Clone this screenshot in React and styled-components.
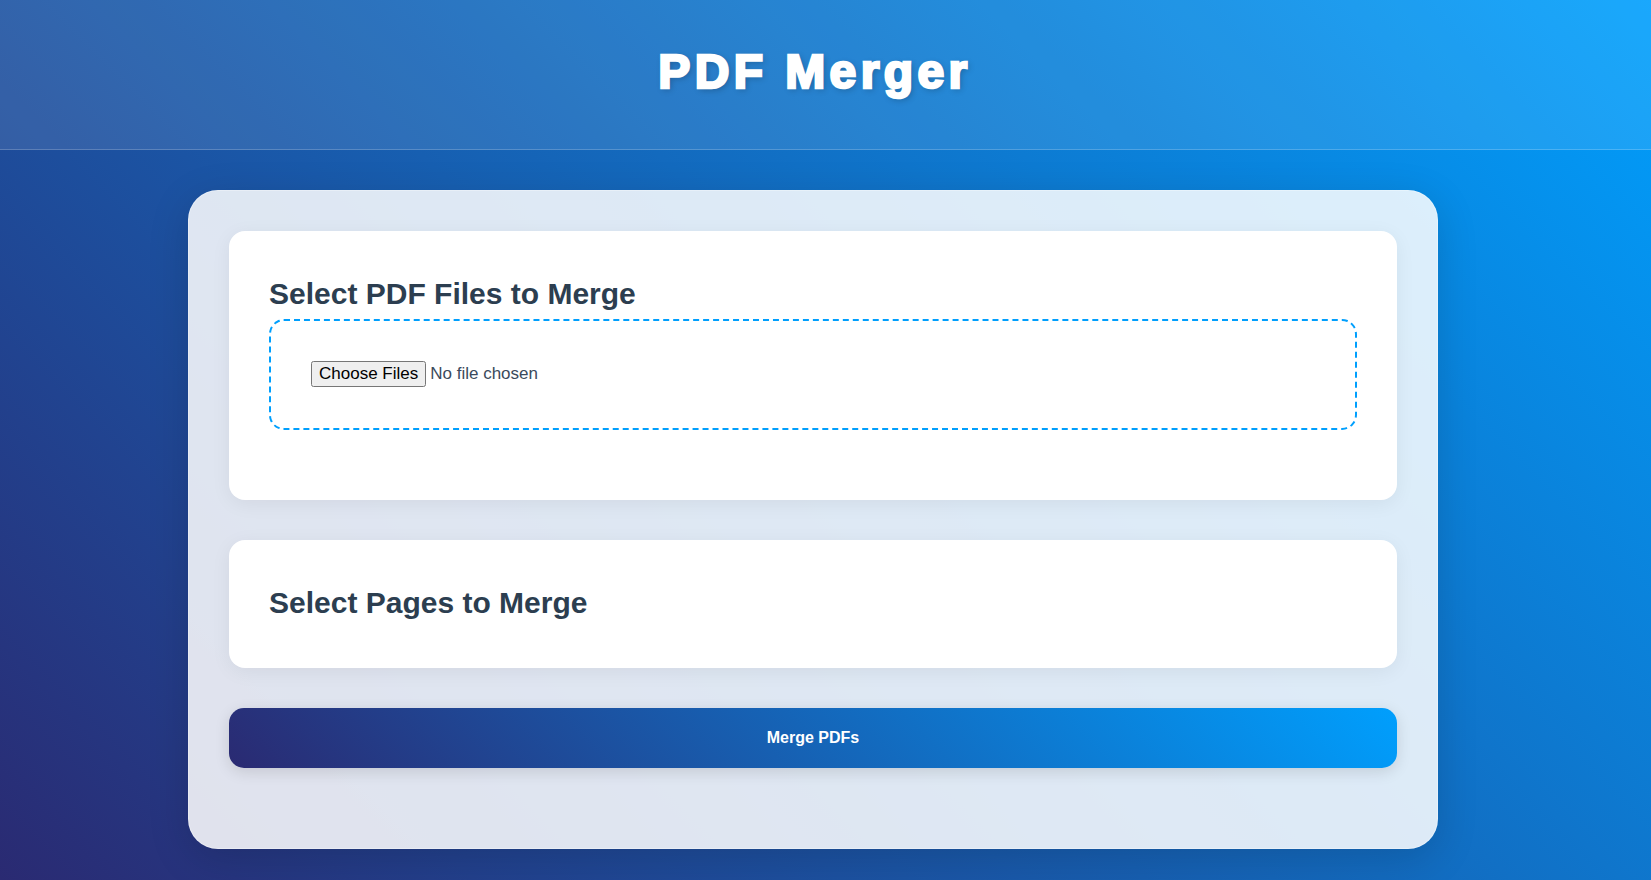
import React from 'react';
import styled, { createGlobalStyle } from 'styled-components';

const GlobalStyle = createGlobalStyle`
  * {
    box-sizing: border-box;
  }

  body {
    margin: 0;
    min-height: 100vh;
    font-family: "Liberation Sans", Arial, sans-serif;
    color: #2c3e50;
    background: linear-gradient(45deg, #2a2a72 0%, #009ffd 100%);
    background-attachment: fixed;
  }
`;

const Header = styled.header`
  height: 150px;
  display: flex;
  justify-content: center;
  align-items: center;
  padding: 0 21px 6px 0;
  background: rgba(255, 255, 255, 0.1);
  border-bottom: 1px solid rgba(255, 255, 255, 0.2);

  h1 {
    margin: 0;
    font-size: 48px;
    font-weight: 700;
    letter-spacing: 4.4px;
    color: #fff;
    -webkit-text-stroke: 2.6px #fff;
    text-shadow: 2px 2px 6px rgba(0, 0, 0, 0.25);
  }
`;

const Main = styled.main`
  display: flex;
  justify-content: center;
  padding: 40px 25px 40px 0;
`;

const Card = styled.div`
  width: 1250px;
  padding: 40px;
  border-radius: 30px;
  border: 1px solid rgba(255, 255, 255, 0.3);
  background: rgba(255, 255, 255, 0.86);
  box-shadow: 0 10px 40px rgba(0, 0, 0, 0.15);
  display: flex;
  flex-direction: column;
  gap: 40px;
`;

const Section = styled.section`
  background: #fff;
  border-radius: 16px;
  padding: 40px;
  box-shadow: 0 4px 20px rgba(0, 0, 0, 0.06);

  h2 {
    margin: 0 0 3px;
    font-size: 30px;
    line-height: 45px;
    font-weight: 700;
    color: #2c3e50;
  }
`;

const DropZone = styled.div`
  height: 111px;
  margin-bottom: 30px;
  padding: 40px;
  border: 2px dashed #009ffd;
  border-radius: 15px;

  input {
    font-family: "Liberation Sans", Arial, sans-serif;
    font-size: 17px;
    color: #3b4a5c;
  }
`;

const MergeButton = styled.button`
  height: 60px;
  margin-bottom: 40px;
  border: none;
  border-radius: 15px;
  background: linear-gradient(45deg, #2a2a72 0%, #009ffd 100%);
  color: #fff;
  font-family: "Liberation Sans", Arial, sans-serif;
  font-size: 16px;
  font-weight: 700;
  cursor: pointer;
  box-shadow: 0 4px 15px rgba(0, 0, 0, 0.12);
`;

export default function App() {
  return (
    <>
      <GlobalStyle />
      <Header>
        <h1>PDF Merger</h1>
      </Header>
      <Main>
        <Card>
          <Section>
            <h2>Select PDF Files to Merge</h2>
            <DropZone>
              <input type="file" accept="application/pdf" multiple />
            </DropZone>
          </Section>
          <Section>
            <h2>Select Pages to Merge</h2>
          </Section>
          <MergeButton>Merge PDFs</MergeButton>
        </Card>
      </Main>
    </>
  );
}
